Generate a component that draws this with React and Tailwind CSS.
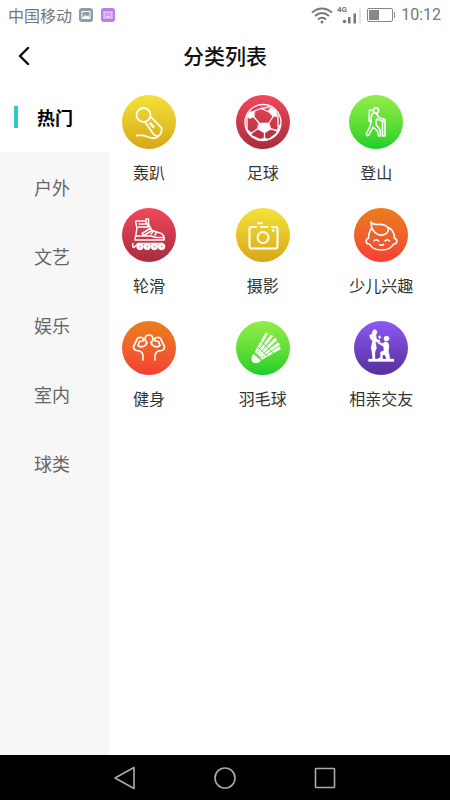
import { useState } from "react";

const MicIcon = () => (
  <>
    <circle cx="21.5" cy="20" r="7" />
    <path d="M29.5 22.5 39.5 33Q40.500 38 36.5 41Q33 41.5 31 38.5L23.500 27.5" />
    <path d="M28.5 28.5l3 3.500" strokeWidth="2.4" />
    <path d="M36.5 41C33 44.5 28 43 25 41.5C21 39.8 18 40.5 14.5 40.5" />
  </>
);

const FootballIcon = () => (
  <>
    <circle cx="27" cy="27.5" r="18" strokeWidth="1.3" />
    <path
      d="M23 28H33L35 34 28.5 38 21.5 34ZM18 22 13.5 23.5 11 21.5 13.5 17 18.500 16ZM37 21.5 32 16.500 34.5 12.5 39.500 15.5 42 21ZM41 35.5 42.5 31 44.300 29.5 43 35 40.5 38.5ZM28.5 43 33 44.300 28 45.500 24 44.500ZM15.500 38 12 35 10 32.500 12 37.500 15 40.5Z"
      fill="white"
      strokeWidth="0.6"
    />
    <path
      d="M23 28 18 22M33 28 37 21.5M35 34 41 35.5M28.5 38V43M21.5 34 15.500 38M18.500 16 25 13.500 32 16.5M25 13.500 33 12M11 21.500V34M42 21V31M40.5 38.5 33 44.300M15 40.5 24 44.500"
      strokeWidth="1.3"
    />
  </>
);

const HikerIcon = () => (
  <g strokeWidth="1.6">
    <circle cx="27" cy="15.5" r="2.6" />
    <path d="M23.5 15.5 20.5 15 20 26 22.5 26" />
    <path d="M24.5 18C22.5 19 22 22 22 25.5L21.5 30 17.5 38.5Q17 41 19.5 40.5L24 32 28.5 36 29 40Q30 42 31.5 40.5L31 34.5 27 29.5 27.5 24 35 26.5Q37 25.5 35.5 24.5L30 22.5 27.5 18.5Q26 17.5 24.5 18Z" />
    <path d="M33.5 27V41H36V27" />
  </g>
);

const SkateIcon = () => (
  <>
    <g strokeWidth="1.5">
      <path d="M23 13H14Q13.5 13 14 16L15 20 13 32H42V29Q41 25.5 36.5 24.5L30 22.5 27 17" />
      <path d="M17 16H26V19H16.5M24 16V11H26.5V19" />
      <path d="M20 25.5 28 20.5 30 22.5 22 27.5ZM31.5 23.5 29 26M34.5 24.5 33 27M14 28H29L34 29.5H42" />
      <path d="M11 35.5Q10 39 12 39.5L16 35.5H40" />
    </g>
    <g fill="white" strokeWidth="0.5">
      <circle cx="18" cy="38.5" r="3.4" />
      <circle cx="25.2" cy="38.5" r="3.4" />
      <circle cx="32.4" cy="38.5" r="3.4" />
      <circle cx="39.6" cy="38.5" r="3.4" />
    </g>
    <path d="M18 38.5h.2M25.2 38.5h.2M32.4 38.5h.2M39.6 38.5h.2" stroke="#e86a78" strokeWidth="1.4" />
  </>
);

const CameraIcon = () => (
  <g strokeWidth="2">
    <path d="M20 19H15.5Q13.5 19 13.5 21V38Q13.5 40.5 15.5 40.5H39.5Q41.5 40.5 41.5 38V21Q41.5 19 39.5 19H36M25 19H31.5M22 15.2H26" />
    <circle cx="27" cy="29.5" r="5.5" />
    <circle cx="37.3" cy="22.5" r="1" fill="white" strokeWidth="1" />
  </g>
);

const ChildIcon = () => (
  <g strokeWidth="1.6">
    <path d="M17 14C17 20 18.5 24 24 26.5C29 28.5 34 25.5 34.5 22C34.5 17 28 16 24 16.5C20.5 16.5 18 15.5 17 14Z" />
    <path d="M17.5 20.5Q14.5 24.5 14.5 30.5C11 30.5 11.5 36.5 15.5 36C17.5 40 22 42 27.5 42S37.5 40 39.5 36C43.5 36.5 44 30.5 40.5 30.5Q40.5 22.5 34.5 19.5" />
    <path d="M20 33Q22 30.5 24.5 33M31 33Q33.5 30.5 35.5 33M25.5 36.5Q27.5 38 29.5 36.5" />
  </g>
);

const MuscleIcon = () => (
  <g strokeWidth="1.7">
    <path d="M24 23.5 25 21.5C21.5 18.5 23 14 27 14S32.5 18.5 29 21.5L30 23.5" />
    <path d="M24 23.5C22 26 19 26.5 16 24.5L17.5 20.5 21 20Q22 17 19.5 16.5Q15 16 14.5 19.5L11.5 25.5Q11.5 29 14.5 29.5Q18 29.5 20 31.5Q21.5 34 21 39" />
    <path d="M30 23.5C32 26 35 26.5 38 24.5L36.5 20.5 33 20Q32 17 34.5 16.5Q39 16 39.5 19.5L42.5 25.5Q42.5 29 39.5 29.5Q36 29.5 34 31.5Q32.5 34 33 39" />
  </g>
);

const ShuttlecockIcon = () => (
  <>
    <path
      d="M19 31 29.500 12 32 12.500 20.500 32ZM21 32.500 34.500 14 37 15 22.500 33.500ZM22.500 34 39 17 41 19 24 35ZM24 35.500 42 21.500 44 23.500 25 36.500ZM25 37.500 43.500 25.500 44.500 28 26 38.500Z"
      fill="white"
      strokeWidth="0.5"
    />
    <path d="M24.500 20 37.500 32.500M22 26 31.500 35.500" stroke="#4cdb3c" strokeWidth="0.9" />
    <path d="M17.500 33.500 24 39.500Q21.500 42.500 17.500 41Q14.500 37.500 17.500 33.500Z" fill="white" strokeWidth="1.2" />
  </>
);

const CoupleIcon = () => (
  <g fill="white" strokeWidth="0.3">
    <path d="M20.500 8.500Q23 8.500 23 11.500L22 14 22.500 18 26 19.500V21H21.500L22.500 27 21 31V38H18.500L18 31 17 27 18.500 20 16 17 15.500 14 18 13Q18 9 20.500 8.500Z" />
    <circle cx="32.5" cy="17.5" r="2.6" />
    <path d="M30.500 21Q34.500 20 35 25L34.500 30 36 38H32.500L31 34H28.500V38H24L26.500 36 26.500 31 30 29.5 29.5 25.500 23.5 22 24 21 29 22.500ZM24.500 15.500l1.500-1 1 2-1.5 1.500ZM14.5 38H40V40.5H14.5Z" />
  </g>
);

const tones = {
  yellow: "from-[#f3e337] to-[#d8a716]",
  red: "from-[#f2485c] to-[#a92c3d]",
  green: "from-[#90ee48] to-[#12cf28]",
  orange: "from-[#ea7d1c] to-[#f53d33]",
  purple: "from-[#8d59f4] to-[#55309b]",
};

const categories = ["热门", "户外", "文艺", "娱乐", "室内", "球类"];

const activities = [
  { title: "轰趴", tone: "yellow", icon: MicIcon },
  { title: "足球", tone: "red", icon: FootballIcon },
  { title: "登山", tone: "green", icon: HikerIcon },
  { title: "轮滑", tone: "red", icon: SkateIcon },
  { title: "摄影", tone: "yellow", icon: CameraIcon },
  { title: "少儿兴趣", tone: "orange", icon: ChildIcon },
  { title: "健身", tone: "orange", icon: MuscleIcon },
  { title: "羽毛球", tone: "green", icon: ShuttlecockIcon },
  { title: "相亲交友", tone: "purple", icon: CoupleIcon },
];

const StatusBar = () => (
  <div className="flex h-[30px] items-center justify-between pl-2 pr-[9px] text-[#777]">
    <div className="flex items-center">
      <span className="text-base">中国移动</span>
      <svg className="ml-[7px] h-[14px] w-[14px]" viewBox="0 0 14 14">
        <rect width="14" height="14" rx="3" fill="#8f9ca3" />
        <rect x="3" y="3.5" width="8" height="7" fill="none" stroke="white" />
        <path d="M3 10.5 6 7l2 1.5L9 7l2 3.5Z" fill="white" />
      </svg>
      <svg className="ml-2 h-[14px] w-[14px]" viewBox="0 0 14 14">
        <rect width="14" height="14" rx="3" fill="#bb7fe0" />
        <rect x="3" y="4" width="8" height="6" fill="#cfa0ec" stroke="#ecd5fa" />
        <path d="M5 8.5h4" stroke="#ecd5fa" />
      </svg>
    </div>
    <div className="flex items-center">
      <svg className="h-5 w-[22px]" viewBox="0 0 22 20" fill="none" stroke="#777" strokeWidth="2">
        <path d="M1 7.5Q11-0.5 21 7.5M4 11Q11 5 18 11M7 14.500Q11 11 15 14.500" />
        <circle cx="11" cy="17" r="1.5" fill="#777" stroke="none" />
      </svg>
      <svg className="ml-1 h-[22px] w-6" viewBox="0 0 24 22" fill="#777">
        <text x="0" y="8" fontSize="8" fontWeight="bold" fontFamily="Roboto, sans-serif">
          4G
        </text>
        <circle cx="7.5" cy="17.5" r="1.8" />
        <path d="M11 13h2.500v6.500H11ZM16.500 9.500H19v10h-2.500Z" />
        <path d="M22.5 4.5h1v15h-1Z" fill="#ccc" />
      </svg>
      <svg className="ml-[6px] h-[14px] w-[28px]" viewBox="0 0 28 14" fill="none" stroke="#888">
        <rect x="0.5" y="0.5" width="25" height="13" rx="1.5" />
        <path d="M27.5 4v6" />
        <rect x="2" y="2" width="10" height="10" fill="#888" stroke="none" />
      </svg>
      <span className="ml-[6px] font-['Roboto',sans-serif] text-base">10:12</span>
    </div>
  </div>
);

const ActivityButton = ({ title, tone, icon: Icon }) => (
  <button className="flex w-fit flex-col items-center whitespace-nowrap">
    <span className={`h-[54px] w-[54px] rounded-full bg-linear-to-b ${tones[tone]}`}>
      <svg
        viewBox="0 0 54 54"
        fill="none"
        stroke="white"
        strokeWidth="1.8"
        strokeLinecap="round"
        strokeLinejoin="round"
        aria-hidden="true"
      >
        <Icon />
      </svg>
    </span>
    <span className="mt-[11px] text-base leading-6 text-[#333]">{title}</span>
  </button>
);

const NavigationBar = () => (
  <nav className="flex h-[45px] items-center justify-center gap-[76px] bg-black">
    <button aria-label="返回">
      <svg className="h-6 w-6" viewBox="0 0 24 24" fill="none" stroke="#aaa" strokeWidth="1.6">
        <path d="M21 1.5V22.5L2 12Z" strokeLinejoin="round" />
      </svg>
    </button>
    <button aria-label="主页">
      <svg className="h-6 w-6" viewBox="0 0 24 24" fill="none" stroke="#aaa" strokeWidth="1.6">
        <circle cx="12" cy="12" r="10" />
      </svg>
    </button>
    <button aria-label="最近任务">
      <svg className="h-6 w-6" viewBox="0 0 24 24" fill="none" stroke="#aaa" strokeWidth="1.6">
        <rect x="2.5" y="2.5" width="19" height="19" rx="0.5" />
      </svg>
    </button>
  </nav>
);

export default function App() {
  const [selected, setSelected] = useState("热门");

  return (
    <div className="flex min-h-screen flex-col bg-white font-['Noto_Sans_CJK_SC',sans-serif]">
      <StatusBar />

      <header className="grid h-[52px] grid-cols-[48px_1fr_48px] items-center">
        <button className="flex justify-center" aria-label="后退">
          <svg className="h-5 w-5" viewBox="0 0 20 20" fill="none" stroke="black" strokeWidth="2.4">
            <path d="M14 2 6 10l8 8" strokeLinecap="round" strokeLinejoin="round" />
          </svg>
        </button>
        <h1 className="text-center text-[21px] font-medium text-[#111]">分类列表</h1>
      </header>

      <main className="flex flex-1">
        <aside className="w-[109px] shrink-0 bg-[#f7f7f7]">
          {categories.map((name) =>
            name === selected ? (
              <button
                key={name}
                className="flex h-[70px] w-full items-center bg-white pl-[14px] text-lg font-bold text-black"
              >
                <span className="mr-[19px] h-[22px] w-1 bg-[#2ccbc6]" />
                {name}
              </button>
            ) : (
              <button
                key={name}
                onClick={() => setSelected(name)}
                className="flex h-[69px] w-full items-center pl-[34px] text-lg text-[#666]"
              >
                {name}
              </button>
            )
          )}
        </aside>

        <section className="grid flex-1 grid-cols-3 content-start gap-y-6 pt-[13px]">
          {activities.map((item) => (
            <div key={item.title} className="pl-[13px]">
              <ActivityButton {...item} />
            </div>
          ))}
        </section>
      </main>

      <NavigationBar />
    </div>
  );
}
